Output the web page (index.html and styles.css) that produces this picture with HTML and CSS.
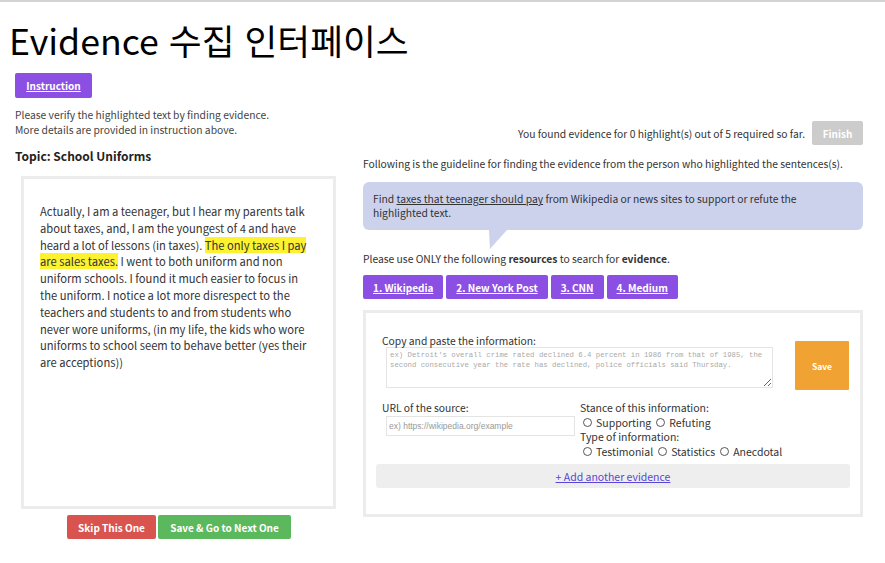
FILE: index.html
```html
<!DOCTYPE html>
<html lang="en">
<head>
<meta charset="utf-8">
<title>Evidence 수집 인터페이스</title>
<link rel="stylesheet" href="styles.css">
</head>
<body>
<div class="topline"></div>
<h1 class="title" lang="ko">Evidence 수집 인터페이스</h1>
<div class="instr-row"><a class="btn purple instr" href="#">Instruction</a></div>
<div class="main">
  <div class="left">
    <p class="note">Please verify the highlighted text by finding evidence.<br>More details are provided in instruction above.</p>
    <h2 class="topic">Topic: School Uniforms</h2>
    <div class="textbox">
      <p>Actually, I am a teenager, but I hear my parents talk about taxes, and, I am the youngest of 4 and have heard a lot of lessons (in taxes). <mark>The only taxes I pay are sales taxes.</mark> I went to both uniform and non uniform schools. I found it much easier to focus in the uniform. I notice a lot more disrespect to the teachers and students to and from students who never wore uniforms, (in my life, the kids who wore uniforms to school seem to behave better (yes their are acceptions))</p>
    </div>
    <div class="actions">
      <button class="btn red">Skip This One</button>
      <button class="btn green">Save &amp; Go to Next One</button>
    </div>
  </div>
  <div class="right">
    <div class="progress">
      <span>You found evidence for 0 highlight(s) out of 5 required so far.</span>
      <button class="btn gray">Finish</button>
    </div>
    <p class="guide">Following is the guideline for finding the evidence from the person who highlighted the sentences(s).</p>
    <div class="bubble">Find <u>taxes that teenager should pay</u> from Wikipedia or news sites to support or refute the highlighted text.</div>
    <p class="res-note">Please use ONLY the following <b>resources</b> to search for <b>evidence</b>.</p>
    <div class="resources">
      <a class="btn purple" href="#">1. Wikipedia</a>
      <a class="btn purple" href="#">2. New York Post</a>
      <a class="btn purple" href="#">3. CNN</a>
      <a class="btn purple" href="#">4. Medium</a>
    </div>
    <div class="formbox">
      <div class="row1">
        <div class="field">
          <label class="lbl">Copy and paste the information:</label>
          <textarea class="info" placeholder="ex) Detroit's overall crime rated declined 6.4 percent in 1986 from that of 1985, the second consecutive year the rate has declined, police officials said Thursday."></textarea>
        </div>
        <button class="btn orange">Save</button>
      </div>
      <div class="row2">
        <div class="field url">
          <label class="lbl">URL of the source:</label>
          <input class="urlin" type="text" placeholder="ex) https://wikipedia.org/example">
        </div>
        <div class="opts">
          <div>Stance of this information:</div>
          <div class="radios"><span class="opt"><span class="radio"></span>Supporting</span><span class="opt"><span class="radio"></span>Refuting</span></div>
          <div>Type of information:</div>
          <div class="radios"><span class="opt"><span class="radio"></span>Testimonial</span><span class="opt"><span class="radio"></span>Statistics</span><span class="opt"><span class="radio"></span>Anecdotal</span></div>
        </div>
      </div>
      <div class="addbar"><a href="#">+ Add another evidence</a></div>
    </div>
  </div>
</div>
</body>
</html>
```
FILE: styles.css
```css
* { box-sizing: border-box; }
html, body { margin: 0; padding: 0; background: #fff; }
body {
  font-family: "Noto Sans CJK KR", "Noto Sans", sans-serif;
  color: #333;
  font-size: 10.3px;
}
.topline { height: 2px; background: #d4d4d4; }
.title {
  margin: 0;
  padding: 16px 0 0 9px;
  height: 62px;
  font-family: "Noto Sans CJK KR", "Noto Sans", sans-serif;
  font-weight: 400;
  font-size: 35.7px;
  line-height: 44px;
  color: #000;
}
.instr-row { padding: 9px 0 0 15px; height: 34px; }
.btn {
  display: inline-flex;
  align-items: center;
  justify-content: center;
  border: none;
  border-radius: 2px;
  color: #fff;
  font-family: "Noto Sans CJK KR", "Noto Sans", sans-serif;
  font-weight: 700;
  font-size: 10px;
  text-decoration: none;
  padding: 0 10px;
  height: 25px;
  white-space: nowrap;
  cursor: pointer;
}
.purple { background: #8c4fe3; text-decoration: underline; }
.instr { width: 77px; }
.main {
  display: grid;
  grid-template-columns: 321px 500px;
  column-gap: 27px;
  padding-left: 15px;
}
.note { margin: 9px 0 0; line-height: 15px; font-size: 10.3px; color: #444; }
.topic { margin: 11px 0 0; font-size: 12px; font-weight: 700; color: #222; line-height: 16px; }
.textbox {
  margin: 12px 0 0 6px;
  height: 333px;
  border: 3px solid #ececec;
  padding: 24px 20px 0 16px;
}
.textbox p { margin: 0; font-size: 11.2px; line-height: 16.8px; color: #333; }
mark { background: #fdf22f; color: #333; }
.actions { display: flex; gap: 2px; margin: 6px 0 0 52px; }
.red { background: #d9534f; width: 89px; height: 24px; padding: 0; }
.green { background: #5cb85c; width: 133px; height: 24px; padding: 0; }
.progress {
  display: flex;
  justify-content: flex-end;
  align-items: center;
  gap: 7px;
  margin-top: 23px;
  font-size: 10.3px;
}
.gray { background: #cccccc; width: 51px; height: 24px; }
.guide { margin: 12px 0 0; line-height: 14px; font-size: 10.3px; }
.bubble {
  position: relative;
  margin-top: 11px;
  background: #cdd2ec;
  border-radius: 6px;
  height: 48px;
  padding: 10px 22px 0 10px;
  line-height: 14px;
  font-size: 10.3px;
  color: #333;
}
.bubble::after {
  content: "";
  position: absolute;
  left: 126px;
  top: 48px;
  width: 18px;
  height: 19px;
  background: #cdd2ec;
  clip-path: polygon(0 0, 100% 0, 5% 100%);
}
.res-note { margin: 22px 0 0; line-height: 14px; font-size: 10.3px; }
.resources { display: flex; gap: 3px; margin-top: 9px; }
.resources .btn { height: 24px; padding: 0 10px; }
.formbox {
  margin-top: 11px;
  width: 500px;
  height: 207px;
  border: 3px solid #ececec;
  padding: 22px 10px 0;
}
.row1 { display: flex; align-items: flex-start; padding-left: 6px; }
.lbl { display: block; font-size: 10.3px; line-height: 12px; color: #333; }
.url .lbl { line-height: 14px; }
.info {
  display: block;
  margin: 0 0 0 4px;
  width: 387px;
  height: 41px;
  border: 1px solid #e4e4e4;
  padding: 2px 3px;
  font-family: "Liberation Mono", monospace;
  font-size: 7.3px;
  line-height: 10px;
  resize: vertical;
}
.info::placeholder { color: #aaa; }
.orange {
  background: #f0a232;
  width: 54px;
  height: 49px;
  margin: 6px 0 0 22px;
  font-size: 8.5px;
  border-radius: 1px;
}
.row2 { display: flex; padding-left: 6px; margin-top: 11px; }
.url { width: 198px; }
.urlin {
  display: block;
  margin: 1px 0 0 4px;
  width: 189px;
  height: 20px;
  border: 1px solid #e4e4e4;
  padding: 0 2px;
  font-family: "Liberation Sans", sans-serif;
  font-size: 8.5px;
}
.urlin::placeholder { color: #999; }
.opts { line-height: 14.5px; font-size: 10.5px; color: #333; }
.radios { display: flex; gap: 5px; padding-left: 3px; }
.opt { display: inline-flex; align-items: center; }
.radio {
  display: inline-block;
  width: 9px;
  height: 9px;
  border: 1px solid #555;
  border-radius: 50%;
  margin-right: 4px;
}
.addbar {
  margin-top: 5px;
  height: 24px;
  background: #eeeeee;
  border-radius: 3px;
  display: flex;
  align-items: center;
  justify-content: center;
  font-size: 10.5px;
}
.addbar a { color: #5a46d6; text-decoration: underline; }
```
